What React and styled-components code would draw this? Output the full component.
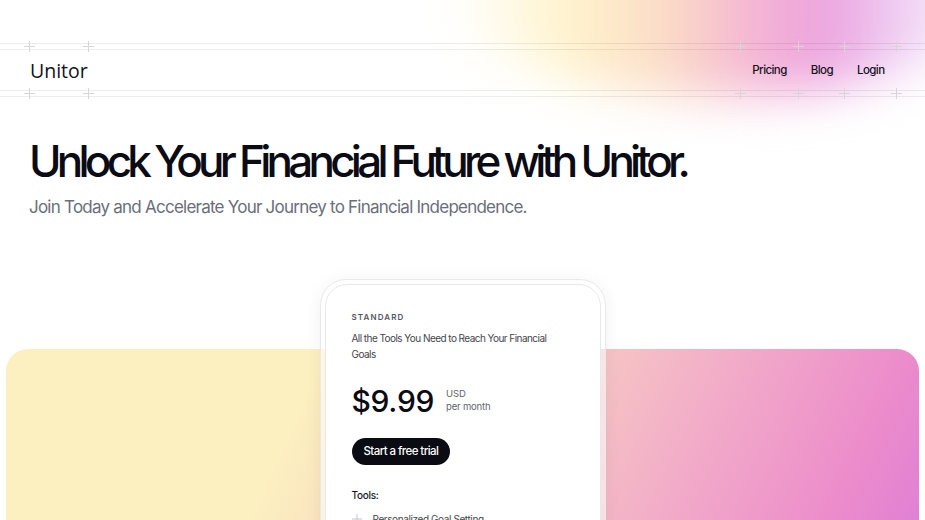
import React from 'react'
import styled, { createGlobalStyle } from 'styled-components'

const GlobalStyle = createGlobalStyle`
  body {
    margin: 0;
    background: #ffffff;
    font-family: Inter, "Noto Sans", sans-serif;
    color: #0b0b12;
  }
`

const Page = styled.div`
  position: relative;
  overflow: hidden;
  min-height: 100vh;

  &::before {
    content: '';
    position: absolute;
    left: 450px;
    top: -108px;
    width: 540px;
    height: 205px;
    border-radius: 50%;
    background: linear-gradient(90deg,
      rgba(255, 250, 230, 0) 0%,
      #fff3cc 22%,
      #fbdcc6 40%,
      #f4b4d4 57%,
      #eca2de 69%,
      #efd0f4 84%,
      rgba(255, 255, 255, 0) 100%);
    filter: blur(24px);
    z-index: 0;
  }
`

const Content = styled.div`
  position: relative;
  z-index: 1;
`

const Header = styled.header`
  padding-top: 43px;
`

const Rule = styled.div`
  height: 5px;
  border-top: 1px solid rgba(0, 0, 0, 0.07);
  border-bottom: 1px solid rgba(0, 0, 0, 0.07);
`

const NavRow = styled.div`
  display: flex;
  justify-content: space-between;
  height: 40px;
  padding: 0 29px;
`

const crossLayers = `
  linear-gradient(#d6d6d9, #d6d6d9) 5px 0 / 1px 11px no-repeat,
  linear-gradient(#d6d6d9, #d6d6d9) 0 5px / 11px 1px no-repeat,
  linear-gradient(#d6d6d9, #d6d6d9) 5px 47px / 1px 11px no-repeat,
  linear-gradient(#d6d6d9, #d6d6d9) 0 52px / 11px 1px no-repeat
`

const Cell = styled.div`
  position: relative;
  display: flex;
  align-items: center;
  padding: ${p => (p.$logo ? '0' : '0 11.5px 0 12.5px')};

  &::before,
  &::after {
    content: '';
    position: absolute;
    top: -9px;
    width: 11px;
    height: 58px;
    background: ${crossLayers};
  }
  &::before {
    left: -5px;
  }
  &::after {
    right: -6px;
    display: ${p => (p.$closing ? 'block' : 'none')};
  }
`

const Logo = styled.span`
  font-family: "Open Sans", "Noto Sans", sans-serif;
  font-size: 19.5px;
  color: #111118;
  padding-left: 1px;
`

const Nav = styled.nav`
  display: flex;
`

const NavLink = styled.a`
  font-size: 11.5px;
  font-weight: 500;
  letter-spacing: -0.05em;
  color: #14141c;
  text-decoration: none;
`

const Hero = styled.section`
  padding: 39px 29px 0;
`

const Title = styled.h1`
  margin: 0;
  font-size: 44px;
  line-height: 50px;
  font-weight: 500;
  letter-spacing: -0.108em;
  color: #0b0b14;
`

const Subtitle = styled.p`
  margin: 9px 0 0;
  font-size: 17px;
  line-height: 24px;
  letter-spacing: -0.045em;
  color: #6a6e7a;
`

const PricingArea = styled.section`
  display: grid;
  grid-template-columns: 1fr;
  grid-template-rows: 70px auto 60px;
  margin-top: 60px;
`

const Panel = styled.div`
  grid-column: 1;
  grid-row: 2 / 4;
  margin: 0 6px;
  border-radius: 22px;
  background: linear-gradient(115deg,
    #fcefc0 0%,
    #fcefc0 30%,
    #f9dcc0 42%,
    #f6c6c4 55%,
    #f2acc8 68%,
    #ec8ccb 84%,
    #d676dc 100%);
`

const Ring = styled.div`
  grid-column: 1;
  grid-row: 1 / 3;
  justify-self: center;
  z-index: 1;
  padding: 4px;
  border: 1px solid #e9e9ec;
  border-radius: 26px;
  background: rgba(255, 255, 255, 0.55);
  box-shadow: 0 2px 18px rgba(0, 0, 0, 0.06);
`

const Card = styled.div`
  width: 276px;
  box-sizing: border-box;
  padding: 26px 26px 30px;
  background: #ffffff;
  border: 1px solid #e8e8ec;
  border-radius: 22px;
`

const Plan = styled.div`
  font-size: 8px;
  line-height: 12px;
  font-weight: 600;
  letter-spacing: 0.14em;
  color: #55575f;
`

const Description = styled.p`
  max-width: 200px;
  margin: 7px 0 0;
  font-size: 10px;
  line-height: 16px;
  letter-spacing: -0.055em;
  color: #44464e;
`

const PriceRow = styled.div`
  display: flex;
  align-items: flex-start;
  gap: 12px;
  margin-top: 21px;
`

const Price = styled.span`
  font-size: 30px;
  line-height: 36px;
  font-weight: 500;
  letter-spacing: -0.01em;
  color: #0b0b14;
`

const PriceMeta = styled.div`
  margin-top: 3.5px;
  font-size: 9.5px;
  line-height: 13.5px;
  letter-spacing: -0.02em;
  color: #62646c;
`

const TrialButton = styled.button`
  margin-top: 19px;
  height: 26.5px;
  padding: 0 12px;
  border: none;
  border-radius: 14px;
  background: #0b0b14;
  color: #ffffff;
  font-family: Inter, sans-serif;
  font-size: 11.5px;
  font-weight: 500;
  letter-spacing: -0.05em;
`

const ToolsLabel = styled.div`
  margin-top: 23px;
  font-size: 10px;
  line-height: 14px;
  font-weight: 500;
  letter-spacing: -0.03em;
  color: #16161e;
`

const ToolList = styled.ul`
  list-style: none;
  margin: 9.5px 0 0;
  padding: 0;
  display: flex;
  flex-direction: column;
  gap: 9px;
`

const Tool = styled.li`
  display: flex;
  align-items: center;
  gap: 11px;
  font-size: 10px;
  line-height: 16px;
  letter-spacing: -0.04em;
  color: #44464e;
`

const Plus = () => (
  <svg width="10" height="10" viewBox="0 0 10 10" fill="none">
    <path d="M5 0v10M0 5h10" stroke="#c4c4ca" strokeWidth="1" />
  </svg>
)

const tools = [
  'Personalized Goal Setting',
  'Automated Savings Plans',
  'Investment Insights',
  'Budget Tracking',
]

export default function App() {
  return (
    <>
      <GlobalStyle />
      <Page>
        <Content>
          <Header>
            <Rule />
            <NavRow>
              <Cell $logo $closing>
                <Logo>Unitor</Logo>
              </Cell>
              <Nav>
                <Cell><NavLink href="#">Pricing</NavLink></Cell>
                <Cell><NavLink href="#">Blog</NavLink></Cell>
                <Cell $closing><NavLink href="#">Login</NavLink></Cell>
              </Nav>
            </NavRow>
            <Rule />
          </Header>

          <Hero>
            <Title>Unlock Your Financial Future with Unitor.</Title>
            <Subtitle>Join Today and Accelerate Your Journey to Financial Independence.</Subtitle>
          </Hero>

          <PricingArea>
            <Panel />
            <Ring>
              <Card>
                <Plan>STANDARD</Plan>
                <Description>All the Tools You Need to Reach Your Financial Goals</Description>
                <PriceRow>
                  <Price>$9.99</Price>
                  <PriceMeta>
                    USD<br />per month
                  </PriceMeta>
                </PriceRow>
                <TrialButton>Start a free trial</TrialButton>
                <ToolsLabel>Tools:</ToolsLabel>
                <ToolList>
                  {tools.map(t => (
                    <Tool key={t}><Plus />{t}</Tool>
                  ))}
                </ToolList>
              </Card>
            </Ring>
          </PricingArea>
        </Content>
      </Page>
    </>
  )
}
